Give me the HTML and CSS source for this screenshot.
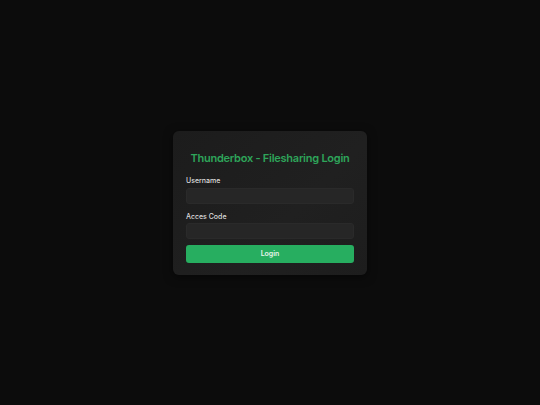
FILE: index.html
```html
<!DOCTYPE html>
<html>
<head>
<meta charset="utf-8">
<link rel="stylesheet" href="styles.css">
</head>
<body>
<div class="page">
  <form class="card">
    <h1 class="title">Thunderbox - Filesharing Login</h1>
    <label class="label">Username</label>
    <input class="input" type="text">
    <label class="label label-second">Acces Code</label>
    <input class="input input-second" type="password">
    <button class="btn" type="button">Login</button>
  </form>
</div>
</body>
</html>
```

FILE: styles.css
```css
html, body {
  margin: 0;
  padding: 0;
  background: #0c0c0c;
  font-family: "Inter", "Noto Sans", sans-serif;
}
.page {
  width: 540px;
  height: 405px;
  display: flex;
  align-items: center;
  justify-content: center;
}
.card {
  width: 168px;
  padding: 20px 13px 12px 13px;
  background: linear-gradient(135deg, #1c1c1c, #202020 60%, #1d1d1d);
  border-radius: 6px;
  box-shadow: 0 2px 10px rgba(0,0,0,0.5);
  display: flex;
  flex-direction: column;
}
.title {
  margin: 0 0 10px 0;
  font-size: 11px;
  font-weight: 600;
  letter-spacing: -0.25px;
  color: #2ea55a;
  text-align: center;
  line-height: 15px;
  white-space: nowrap;
}
.label {
  font-size: 7px;
  font-weight: 500;
  color: #dcdcdc;
  line-height: 9px;
  margin-bottom: 3px;
}
.label-second {
  margin-bottom: 2px;
}
.input {
  box-sizing: border-box;
  width: 168px;
  height: 16px;
  background: #262626;
  border: 1px solid #2a2a2a;
  border-radius: 3px;
  margin: 0 0 8px 0;
  padding: 0 4px;
  outline: none;
}
.input-second {
  margin-bottom: 6px;
}
.btn {
  height: 18px;
  width: 168px;
  border: none;
  border-radius: 3px;
  background: #27ae60;
  color: #e8f5ec;
  font-family: inherit;
  font-size: 7px;
  font-weight: 600;
  padding: 0;
}
```
